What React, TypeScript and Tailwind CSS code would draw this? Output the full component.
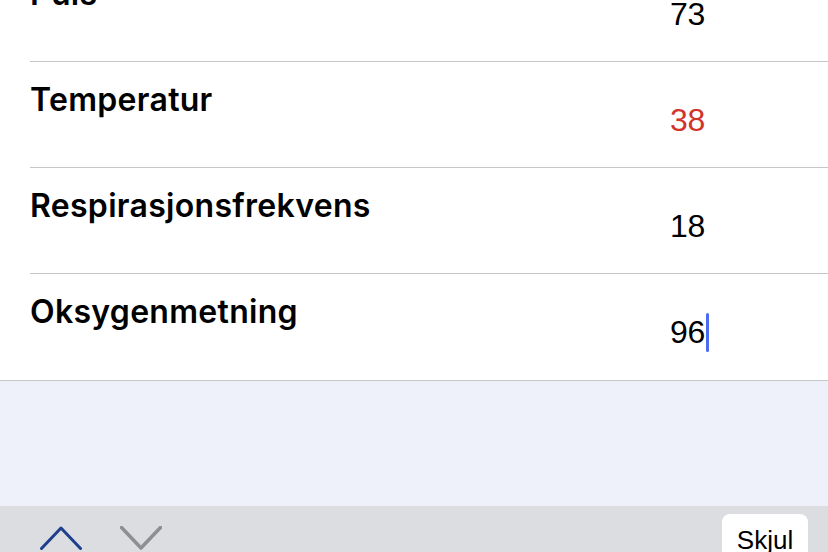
import React from "react";

type Vital = { label: string; value: string; alert?: boolean; editing?: boolean };

const VITALS: Vital[] = [
  { label: "Puls", value: "73" },
  { label: "Temperatur", value: "38", alert: true },
  { label: "Respirasjonsfrekvens", value: "18" },
  { label: "Oksygenmetning", value: "96", editing: true },
];

const FONT = { fontFamily: "Inter, 'Liberation Sans', sans-serif" };

export default function App() {
  return (
    <div className="h-[552px] w-[828px] overflow-hidden bg-[#eef1f9] flex flex-col" style={FONT}>
      {/* List */}
      <div className="bg-white -mt-[44px] border-b border-[#c6c6c8]">
        {VITALS.map((v, i) => (
          <div key={v.label} className="pl-[30px]">
            <div
              className={`h-[106px] flex ${i < VITALS.length - 1 ? "border-b border-[#c6c6c8]" : ""}`}
            >
              <div className="w-[640px] pt-[19px] text-[32px] leading-[38px] font-semibold text-black tracking-[0.3px]">
                {v.label}
              </div>
              <div
                className={`pt-[10px] text-[32px] leading-[38px] tracking-[-0.3px] flex items-center ${
                  v.alert ? "text-[#d0342c]" : "text-black"
                }`}
                style={{ fontFamily: "'Liberation Sans', Arial, sans-serif" }}
              >
                {v.value}
                {v.editing && <span className="ml-[1px] inline-block w-[3px] h-[39px] rounded-full bg-[#4b6bf0]" />}
              </div>
            </div>
          </div>
        ))}
      </div>

      <div className="flex-1" />

      {/* Keyboard accessory bar */}
      <div className="h-[46px] shrink-0 bg-[#dcdde1] flex items-start justify-between pl-[40px] pr-[20px]">
        <div className="flex items-center gap-[38px] pt-[20px]">
          <svg width="42" height="24" viewBox="0 0 42 24" fill="none">
            <path d="M1.5 22.5 L21 2 L40.5 22.5" stroke="#1d3f8c" strokeWidth="3" strokeLinecap="round" strokeLinejoin="round" />
          </svg>
          <svg width="42" height="24" viewBox="0 0 42 24" fill="none">
            <path d="M1.5 1.5 L21 22 L40.5 1.5" stroke="#8e8e93" strokeWidth="3.5" strokeLinecap="round" strokeLinejoin="round" />
          </svg>
        </div>
        <button
          className="mt-[8px] w-[86px] h-[50px] bg-white rounded-[8px] text-[26px] leading-[40px] text-black pt-[6px] flex justify-center"
          style={{ fontFamily: "'Liberation Sans', Arial, sans-serif" }}
        >
          Skjul
        </button>
      </div>
    </div>
  );
}
